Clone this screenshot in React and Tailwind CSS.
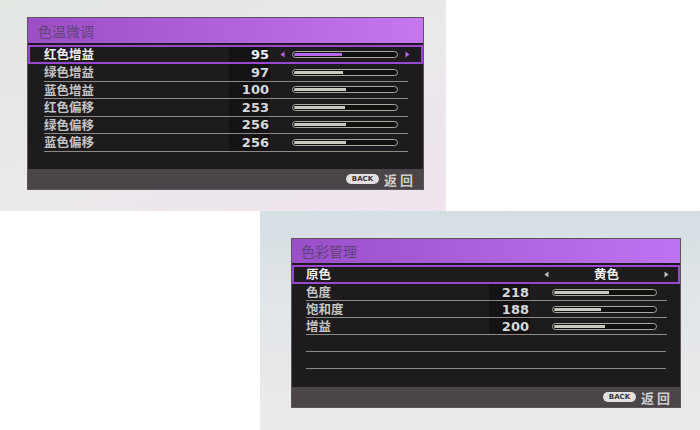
import React from 'react';

const cjk = { fontFamily: '"Noto Sans CJK SC", "Noto Sans", sans-serif' };
const num = { fontFamily: '"DejaVu Sans", "Liberation Sans", sans-serif' };

const Arrow = ({ dir, color }) => (
  <svg width="5" height="7" viewBox="0 0 5 7" className="block">
    {dir === 'left' ? (
      <polygon points="4.5,0.5 4.5,6.5 0.5,3.5" fill={color} />
    ) : (
      <polygon points="0.5,0.5 0.5,6.5 4.5,3.5" fill={color} />
    )}
  </svg>
);

const Slider = ({ pct, active, width }) => (
  <div
    className="h-[7px] rounded-full border border-[#a9a9a0] bg-[#111011] overflow-hidden p-[1px]"
    style={{ width }}
  >
    <div
      className={active ? 'h-full rounded-l-full bg-[#b866ea]' : 'h-full rounded-l-full bg-[#c9c9c2]'}
      style={{ width: `${pct}%` }}
    />
  </div>
);

const Footer = () => (
  <div className="h-[20px] bg-[#4a4548] flex items-center justify-end pr-[7px] gap-[5px]">
    <div
      className="w-[33px] h-[10px] rounded-full bg-[#e2e0e2] flex items-center justify-center text-[7px] font-bold text-[#3a383a] leading-none"
      style={num}
    >
      BACK
    </div>
    <span className="text-[13px] font-bold text-[#cfcdcf] tracking-[3px] leading-none" style={cjk}>
      返回
    </span>
  </div>
);

// 色温微调 — gain / offset per channel
const tempRows = [
  { label: '绿色增益', value: 97, pct: 48 },
  { label: '蓝色增益', value: 100, pct: 51 },
  { label: '红色偏移', value: 253, pct: 50 },
  { label: '绿色偏移', value: 256, pct: 51 },
  { label: '蓝色偏移', value: 256, pct: 51 },
];

const colorRows = [
  { label: '色度', value: 218, pct: 54 },
  { label: '饱和度', value: 188, pct: 47 },
  { label: '增益', value: 200, pct: 50 },
];

const ValueRow = ({ label, value, pct, inset, labelW, sliderW, h }) => (
  <div className="flex flex-col" style={{ height: h, paddingLeft: inset, paddingRight: inset - 1 }}>
    <div className="flex-1 flex items-center border-b border-[#8c8c84]">
      <span className="text-[12.5px] font-bold text-[#c4c4c4] leading-none" style={{ ...cjk, width: labelW }}>
        {label}
      </span>
      <div className="w-[41px] self-stretch bg-[#141214] flex items-center justify-end pr-[1px]">
        <span className="text-[13px] font-bold text-[#d8d8d8] leading-none" style={num}>
          {value}
        </span>
      </div>
      <div className="w-[22px]" />
      <Slider pct={pct} width={sliderW} />
    </div>
  </div>
);

const TempPanel = () => (
  <div className="w-[397px] h-[173px] border border-[#5c5458] bg-[#1d1b1d] flex flex-col">
    <div className="h-[25px] bg-gradient-to-r from-[#9c4ec6] to-[#c676f0] flex items-center pl-[10px]">
      <span className="text-[14px] text-[#62427a] leading-none" style={cjk}>色温微调</span>
    </div>
    <div className="flex-1 flex flex-col pt-[2px]">
      <div className="h-[19px] border-2 border-[#9a48d2] flex items-center pl-[14px]">
        <span className="w-[185px] text-[12.5px] font-bold text-[#f0f0f0] leading-none" style={cjk}>红色增益</span>
        <div className="w-[41px] self-stretch bg-[#141214] flex items-center justify-end pr-[1px]">
          <span className="text-[13px] font-bold text-[#f0f0f0] leading-none" style={num}>95</span>
        </div>
        <div className="w-[22px] flex justify-center pl-[2px]">
          <Arrow dir="left" color="#b466e6" />
        </div>
        <Slider pct={47} active width={106} />
        <div className="w-[18px] flex justify-center">
          <Arrow dir="right" color="#b466e6" />
        </div>
      </div>
      {tempRows.map((r, i) => (
        <ValueRow key={i} {...r} inset={16} labelW={185} sliderW={106} h={17.5} />
      ))}
    </div>
    <Footer />
  </div>
);

const ColorPanel = () => (
  <div className="w-[390px] h-[170px] border border-[#5c5458] bg-[#1d1b1d] flex flex-col">
    <div className="h-[24px] bg-gradient-to-r from-[#9a4ec8] to-[#be74f2] flex items-center pl-[9px]">
      <span className="text-[14px] text-[#62427a] leading-none" style={cjk}>色彩管理</span>
    </div>
    <div className="flex-1 flex flex-col pt-[2px]">
      <div className="h-[19px] border-2 border-[#9a48d2] flex items-center pl-[12px]">
        <span className="w-[238px] text-[12.5px] font-bold text-[#f0f0f0] leading-none" style={cjk}>原色</span>
        <Arrow dir="left" color="#bdbdbd" />
        <span className="w-[115px] text-center text-[12.5px] font-bold text-[#f0f0f0] leading-none" style={cjk}>黄色</span>
        <Arrow dir="right" color="#bdbdbd" />
      </div>
      {colorRows.map((r, i) => (
        <ValueRow key={i} {...r} inset={14} labelW={183} sliderW={105} h={17} />
      ))}
      {[0, 1].map((i) => (
        <div key={i} className="h-[17px] px-[14px]">
          <div className="h-full border-b border-[#8c8c84]" />
        </div>
      ))}
    </div>
    <Footer />
  </div>
);

export default function App() {
  return (
    <div className="w-[700px] h-[430px] bg-white overflow-hidden">
      <div className="w-[446px] h-[211px] bg-[linear-gradient(160deg,#e2e7e2_0%,#ebe9ec_55%,#f0e3ee_100%)] pt-[17px] pl-[27px]">
        <TempPanel />
      </div>
      <div className="ml-[260px] w-[440px] h-[219px] bg-[linear-gradient(180deg,#d5dee3_0%,#e2e6e9_45%,#ecebec_100%)] pt-[27px] pl-[31px]">
        <ColorPanel />
      </div>
    </div>
  );
}
